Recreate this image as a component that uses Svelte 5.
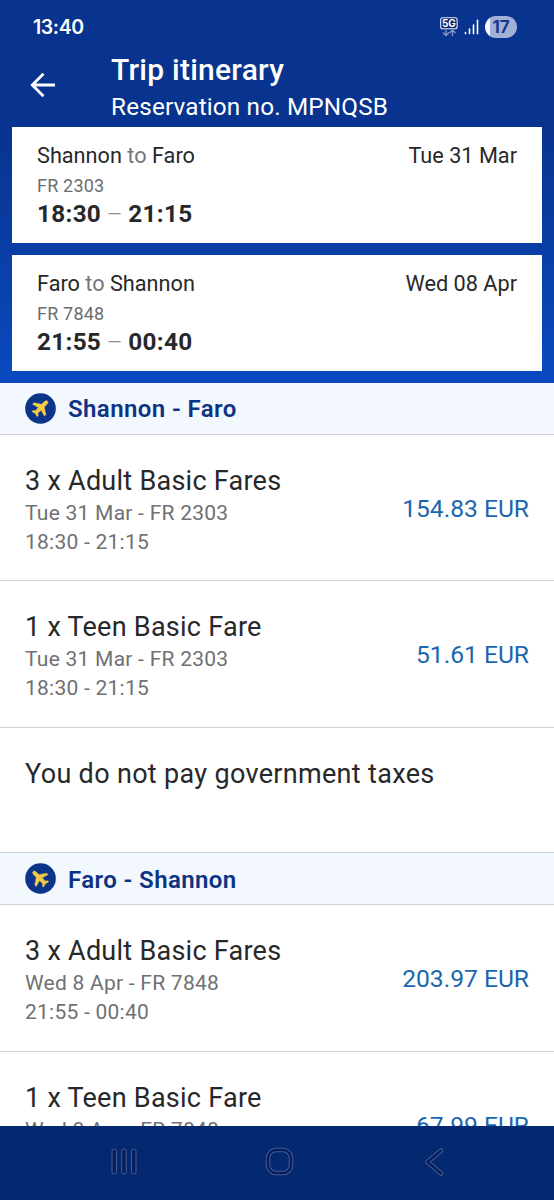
<script lang="ts">
  const flights = [
    { from: 'Shannon', to: 'Faro', date: 'Tue 31 Mar', code: 'FR 2303', departs: '18:30', arrives: '21:15' },
    { from: 'Faro', to: 'Shannon', date: 'Wed 08 Apr', code: 'FR 7848', departs: '21:55', arrives: '00:40' },
  ];

  const sections = [
    {
      title: 'Shannon - Faro',
      inbound: false,
      fares: [
        { name: '3 x Adult Basic Fares', flight: 'Tue 31 Mar - FR 2303', time: '18:30 - 21:15', price: '154.83 EUR' },
        { name: '1 x Teen Basic Fare', flight: 'Tue 31 Mar - FR 2303', time: '18:30 - 21:15', price: '51.61 EUR' },
      ],
      note: 'You do not pay government taxes',
    },
    {
      title: 'Faro - Shannon',
      inbound: true,
      fares: [
        { name: '3 x Adult Basic Fares', flight: 'Wed 8 Apr - FR 7848', time: '21:55 - 00:40', price: '203.97 EUR' },
        { name: '1 x Teen Basic Fare', flight: 'Wed 8 Apr - FR 7848', time: '21:55 - 00:40', price: '67.99 EUR' },
      ],
      note: '',
    },
  ];
</script>

<div class="screen">
  <header>
    <div class="status-bar">
      <span class="clock">13:40</span>
      <div class="indicators">
        <svg class="network" width="18" height="20" viewBox="0 0 18 20">
          <rect x="0.7" y="0.7" width="16.4" height="11" rx="2" fill="#0a2a6a" stroke="#e6ecf8" stroke-width="1.1" />
          <text x="8.9" y="10" text-anchor="middle">5G</text>
          <path d="M6 12.5v6M3 15.5l3 3 3-3M12.5 19v-6M9.5 16l3-3 3 3" fill="none" stroke="#8797c4" stroke-width="1.4" />
        </svg>
        <svg width="15" height="16" viewBox="0 0 15 16" fill="none" stroke="#fff" stroke-width="1.6" stroke-linecap="round">
          <path d="M1.5 13.6v1M5.5 10v4.6M9.5 6v8.6M13.5 1.2v13.4" />
        </svg>
        <span class="battery">17</span>
      </div>
    </div>

    <div class="title-bar">
      <button class="back" aria-label="Back">
        <svg width="26" height="26" viewBox="0 0 26 26" fill="none" stroke="#fff" stroke-width="2.8">
          <path d="M26 13H3.5M14.5 1.8L3.3 13l11.2 11.2" />
        </svg>
      </button>
      <div>
        <h1>Trip itinerary</h1>
        <p class="reservation">Reservation no. MPNQSB</p>
      </div>
    </div>
  </header>

  <div class="flights">
    {#each flights as flight}
      <div class="flight-card">
        <div class="route-row">
          <span class="route">{flight.from} <span class="muted">to</span> {flight.to}</span>
          <span class="date">{flight.date}</span>
        </div>
        <div class="code">{flight.code}</div>
        <div class="times">{flight.departs} <span class="dash">–</span> {flight.arrives}</div>
      </div>
    {/each}
  </div>

  <main>
    {#each sections as section}
      <h2>
        <svg width="31" height="31" viewBox="0 0 31 31">
          <circle cx="15.5" cy="15.5" r="15.3" fill="#0c348a" />
          <g class:inbound={section.inbound}>
            <path
              d="M22.6 8.2c-.9-.9-2.3-.5-3.2.4l-2.9 2.7-7.6-1.5-1.3 1.4 5.7 3.2-2.7 3.3-2.7-.3-1 1 3.3 2 2 3.3 1-1-.3-2.7 3.3-2.7 3.2 5.7 1.4-1.3-1.5-7.6 2.7-2.900c.9-.9 1.400-2.200.6-3z"
              fill="#f2cb4a"
              stroke="#f2cb4a"
              stroke-width="0.5"
              stroke-linejoin="round"
            />
          </g>
        </svg>
        <span>{section.title}</span>
      </h2>
      {#each section.fares as fare}
        <div class="fare">
          <div>
            <div class="fare-name">{fare.name}</div>
            <div class="fare-detail">{fare.flight}</div>
            <div class="fare-detail">{fare.time}</div>
          </div>
          <span class="price">{fare.price}</span>
        </div>
      {/each}
      {#if section.note}
        <p class="note">{section.note}</p>
      {/if}
    {/each}
  </main>

  <nav>
    <svg width="28" height="30" viewBox="0 0 28 30">
      <g fill="#051d5c" stroke="#445d94">
        <rect x="2" y="2" width="4.5" height="25" rx="2.2" />
        <rect x="11.7" y="2" width="4.5" height="25" rx="2.2" />
        <rect x="21.5" y="2" width="4.5" height="25" rx="2.2" />
      </g>
    </svg>
    <svg width="30" height="30" viewBox="0 0 30 30" fill="none">
      <rect x="3" y="3" width="23" height="23" rx="8" stroke="#445d94" stroke-width="4.5" />
      <rect x="3" y="3" width="23" height="23" rx="8" stroke="#051d5c" stroke-width="2.5" />
    </svg>
    <svg width="24" height="30" viewBox="0 0 24 30" fill="none" stroke-linecap="round" stroke-linejoin="round">
      <path d="M20 3.5L6.5 15 20 26.5" stroke="#445d94" stroke-width="4.5" />
      <path d="M20 3.5L6.5 15 20 26.5" stroke="#051d5c" stroke-width="2.5" />
    </svg>
  </nav>
</div>

<style>
  :global(body) {
    margin: 0;
  }

  .screen {
    width: 554px;
    height: 1200px;
    display: flex;
    flex-direction: column;
    overflow: hidden;
    background: #fff;
    color: #272829;
    font-family: Roboto, sans-serif;
  }

  h1,
  h2,
  p {
    margin: 0;
  }

  header {
    flex: none;
    height: 127px;
    background: #08338e;
    color: #fff;
  }

  .status-bar {
    display: flex;
    justify-content: space-between;
    align-items: center;
    height: 54px;
    padding: 0 37px 0 33px;
    box-sizing: border-box;
  }

  .clock {
    font-family: Inter, sans-serif;
    font-size: 19.5px;
    font-weight: 600;
    letter-spacing: -0.4px;
  }

  .indicators {
    display: flex;
    align-items: center;
    gap: 6px;
  }

  .network text {
    font: 700 10px Inter, sans-serif;
    fill: #fff;
  }

  .battery {
    width: 32px;
    height: 22px;
    border-radius: 11px;
    background: linear-gradient(90deg, #f4f7fd 17%, #a3b0d6 17%);
    color: #143a8e;
    font: 700 17px/22px Inter, sans-serif;
    text-align: center;
  }

  .title-bar {
    display: flex;
    height: 73px;
  }

  .back {
    width: 111px;
    height: 26px;
    margin-top: 18px;
    padding: 0 0 0 29px;
    border: 0;
    background: none;
    text-align: left;
  }

  .back svg {
    display: block;
  }

  h1 {
    font-size: 30px;
    font-weight: 500;
    line-height: 31px;
    letter-spacing: 0.25px;
  }

  .reservation {
    font-size: 24.3px;
    line-height: 28px;
    margin-top: 8px;
    letter-spacing: 0.16px;
  }

  .flights {
    flex: none;
    display: flex;
    flex-direction: column;
    gap: 12px;
    height: 256px;
    padding: 0 12px;
    box-sizing: border-box;
    background: linear-gradient(#08338e, #0a4abf);
  }

  .flight-card {
    height: 116px;
    padding: 16px 25px 0;
    box-sizing: border-box;
    background: #fff;
  }

  .route-row {
    display: flex;
    justify-content: space-between;
    font-size: 21.7px;
    line-height: 26px;
  }

  .muted {
    color: #747678;
  }

  .code {
    font-size: 18px;
    line-height: 22px;
    margin-top: 6px;
    color: #6b6d70;
    letter-spacing: 0.2px;
  }

  .times {
    font-size: 24.3px;
    font-weight: 700;
    line-height: 28px;
    margin-top: 3px;
    letter-spacing: 0.3px;
    word-spacing: -0.8px;
  }

  .dash {
    font-weight: 300;
    color: #8b8d8f;
  }

  main {
    flex: 1;
    min-height: 0;
    overflow: hidden;
  }

  h2 {
    display: flex;
    align-items: center;
    gap: 12px;
    height: 51.7px;
    padding-left: 25px;
    box-sizing: border-box;
    border-bottom: 1px solid #cdd0d5;
    background: #f3f7fe;
    color: #0c3483;
    font-size: 24px;
    font-weight: 600;
    letter-spacing: 0.4px;
  }

  h2 span {
    padding-top: 2px;
  }

  .inbound {
    transform: rotate(-90deg);
    transform-origin: 15.5px 15.5px;
  }

  .fare {
    display: flex;
    justify-content: space-between;
    align-items: center;
    height: 146.5px;
    padding: 3px 25px 0;
    box-sizing: border-box;
    border-bottom: 1px solid #cdd0d5;
  }

  .fare-name {
    padding-top: 2px;
    font-size: 27px;
    line-height: 36px;
    letter-spacing: 0.26px;
  }

  .fare-detail {
    font-size: 21px;
    line-height: 29.3px;
    color: #6f7174;
    letter-spacing: 0.25px;
  }

  .price {
    font-size: 24.6px;
    line-height: 29px;
    padding-bottom: 1px;
    color: #1a67ae;
  }

  .note {
    height: 125.7px;
    padding: 29px 25px 0;
    box-sizing: border-box;
    border-bottom: 1px solid #cdd0d5;
    font-size: 27px;
    line-height: 34px;
    letter-spacing: 0.32px;
  }

  nav {
    flex: none;
    display: flex;
    justify-content: space-between;
    height: 74px;
    padding: 21px 109px 0 110px;
    box-sizing: border-box;
    background: #052970;
  }
</style>
